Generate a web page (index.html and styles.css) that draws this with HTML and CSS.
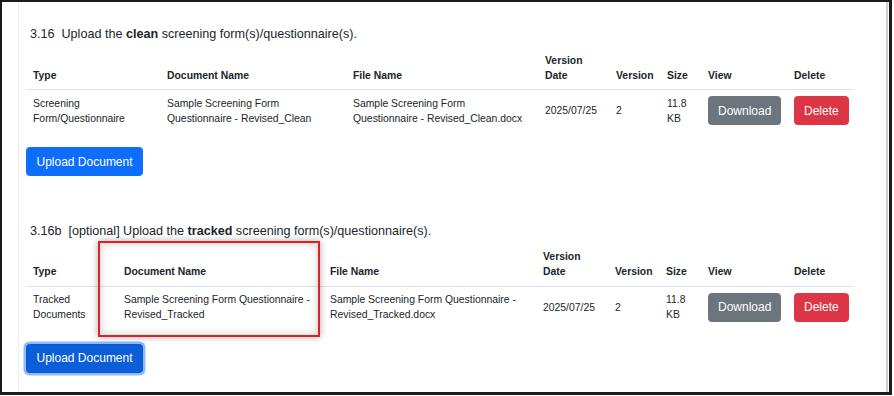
FILE: index.html
```html
<!DOCTYPE html>
<html>
<head>
<meta charset="utf-8">
<link rel="stylesheet" href="styles.css">
</head>
<body>
<div class="frame">
  <div class="panel">
    <section class="section">
      <h3 class="title">3.16&nbsp; Upload the <b>clean</b> screening form(s)/questionnaire(s).</h3>
      <table class="doc-table">
        <colgroup>
          <col class="c134"><col class="c186"><col class="c192"><col class="c71"><col class="c51"><col class="c41"><col class="c86"><col class="c67">
        </colgroup>
        <thead>
          <tr><th>Type</th><th>Document Name</th><th>File Name</th><th>Version Date</th><th>Version</th><th>Size</th><th>View</th><th>Delete</th></tr>
        </thead>
        <tbody>
          <tr>
            <td>Screening Form/Questionnaire</td>
            <td>Sample Screening Form Questionnaire - Revised_Clean</td>
            <td>Sample Screening Form Questionnaire - Revised_Clean.docx</td>
            <td>2025/07/25</td>
            <td>2</td>
            <td>11.8 KB</td>
            <td><button class="btn btn-gray">Download</button></td>
            <td><button class="btn btn-red">Delete</button></td>
          </tr>
        </tbody>
      </table>
      <button class="btn btn-blue">Upload Document</button>
    </section>
    <section class="section second">
      <h3 class="title">3.16b&nbsp; [optional] Upload the <b>tracked</b> screening form(s)/questionnaire(s).</h3>
      <table class="doc-table">
        <colgroup>
          <col class="c91"><col class="c206"><col class="c213"><col class="c72"><col class="c51"><col class="c42"><col class="c86"><col class="c67">
        </colgroup>
        <thead>
          <tr><th>Type</th><th>Document Name</th><th>File Name</th><th>Version Date</th><th>Version</th><th>Size</th><th>View</th><th>Delete</th></tr>
        </thead>
        <tbody>
          <tr>
            <td>Tracked Documents</td>
            <td>Sample Screening Form Questionnaire - Revised_Tracked</td>
            <td>Sample Screening Form Questionnaire - Revised_Tracked.docx</td>
            <td>2025/07/25</td>
            <td>2</td>
            <td>11.8 KB</td>
            <td><button class="btn btn-gray">Download</button></td>
            <td><button class="btn btn-red">Delete</button></td>
          </tr>
        </tbody>
      </table>
      <button class="btn btn-blue focused">Upload Document</button>
    </section>
  </div>
  <div class="highlight"></div>
</div>
</body>
</html>
```
FILE: styles.css
```css
* { box-sizing: border-box; }
html, body { margin: 0; padding: 0; background: #fff; }
body {
  font-family: "Liberation Sans", Arial, sans-serif;
  color: #212529;
  width: 894px;
  height: 396px;
  overflow: hidden;
}
.frame {
  position: relative;
  width: 892px;
  height: 395px;
  border: 2px solid #1b1b1b;
  border-right-width: 3px;
  border-bottom-width: 3px;
  display: flex;
  flex-direction: column;
}
.panel {
  flex: 1;
  margin-left: 16px;
  margin-right: 1px;
  border-left: 1px solid #ededed;
  border-right: 2px solid #cfcfcf;
  padding: 24px 0 0 7px;
}
.title {
  margin: 0 0 5px 4px;
  font-size: 12.6px;
  line-height: 16px;
  font-weight: normal;
  white-space: nowrap;
}
.title b { font-weight: bold; }
.second .title { margin-top: 46.5px; }
.doc-table {
  width: 828px;
  table-layout: fixed;
  border-collapse: collapse;
  font-size: 10.4px;
  line-height: 15px;
}
.c134 { width: 134px; } .c186 { width: 186px; } .c192 { width: 192px; }
.c71 { width: 71px; } .c51 { width: 51px; } .c41 { width: 41px; }
.c86 { width: 86px; } .c67 { width: 67px; }
.c91 { width: 91px; } .c206 { width: 206px; } .c213 { width: 213px; }
.c72 { width: 72px; } .c42 { width: 42px; }
.doc-table th {
  text-align: left;
  font-weight: bold;
  vertical-align: bottom;
  padding: 5.5px 7px 6.5px;
  border-bottom: 1px solid #dee2e6;
}
.doc-table td {
  vertical-align: middle;
  padding: 5.5px 7px;
}
.btn {
  display: inline-block;
  font-family: "Liberation Sans", Arial, sans-serif;
  font-size: 12px;
  line-height: 18px;
  padding: 4.5px 9px;
  border: 1px solid transparent;
  border-radius: 3.5px;
  color: #fff;
  cursor: pointer;
  white-space: nowrap;
}
.btn-gray { background: #6c757d; border-color: #6c757d; }
.btn-red { background: #dc3545; border-color: #dc3545; }
.btn-blue {
  background: #0d6efd;
  border-color: #0d6efd;
  margin-top: 16px;
  padding: 4.5px 9.5px;
}
.btn-blue.focused {
  background: #0b5ed7;
  border-color: #0a58ca;
  box-shadow: 0 0 0 2.5px rgba(49, 132, 253, 0.55);
}
.highlight {
  position: absolute;
  left: 96px;
  top: 239px;
  width: 222px;
  height: 96px;
  border: 2px solid #dd1f26;
  box-shadow: 0 0 7px rgba(0, 0, 0, 0.35), inset 0 0 8px rgba(0, 0, 0, 0.22);
  pointer-events: none;
}
```
